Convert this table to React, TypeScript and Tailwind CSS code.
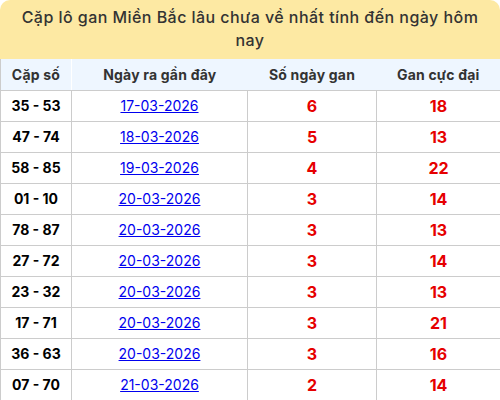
const rows = [
  { pair: "35 - 53", date: "17-03-2026", days: "6", max: "18" },
  { pair: "47 - 74", date: "18-03-2026", days: "5", max: "13" },
  { pair: "58 - 85", date: "19-03-2026", days: "4", max: "22" },
  { pair: "01 - 10", date: "20-03-2026", days: "3", max: "14" },
  { pair: "78 - 87", date: "20-03-2026", days: "3", max: "13" },
  { pair: "27 - 72", date: "20-03-2026", days: "3", max: "14" },
  { pair: "23 - 32", date: "20-03-2026", days: "3", max: "13" },
  { pair: "17 - 71", date: "20-03-2026", days: "3", max: "21" },
  { pair: "36 - 63", date: "20-03-2026", days: "3", max: "16" },
  { pair: "07 - 70", date: "21-03-2026", days: "2", max: "14" },
];

export default function App() {
  return (
    <div
      className="w-[500px] h-[400px] bg-white overflow-hidden"
      style={{ fontFamily: "Inter, 'Noto Sans', sans-serif" }}
    >
      <div className="h-[59px] rounded-t-[10px] bg-[#fde9a3] px-[18px] pt-[6px] text-center text-[16px] leading-[23px] tracking-[0.45px] font-medium text-[#333]">
        Cặp lô gan Miền Bắc lâu chưa về nhất tính đến ngày hôm nay
      </div>
      <table className="w-[500px] table-fixed border-collapse">
        <colgroup>
          <col className="w-[71px]" />
          <col className="w-[176px]" />
          <col className="w-[129px]" />
          <col className="w-[124px]" />
        </colgroup>
        <thead>
          <tr className="h-[31px] bg-[#eef6ff] text-[14px] font-semibold text-[#333] tracking-[0.2px]">
            <th className="border-b border-l border-b-[#cccccc] border-l-[#cccccc] border-r border-r-[#ffffff] p-0">Cặp số</th>
            <th className="border-b border-[#cccccc] p-0">Ngày ra gần đây</th>
            <th className="border-b border-[#cccccc] p-0">Số ngày gan</th>
            <th className="border-b border-r border-[#cccccc] p-0">Gan cực đại</th>
          </tr>
        </thead>
        <tbody>
          {rows.map((r, i) => (
            <tr key={i} className="h-[31px] text-center">
              <td className="border border-[#cccccc] p-0 text-[14px] font-bold text-black">{r.pair}</td>
              <td className="border border-[#cccccc] p-0 text-[14px]">
                <a href="#" className="text-[#0000ee] underline">{r.date}</a>
              </td>
              <td className="border border-[#cccccc] p-0 text-[16px] font-bold text-[#e60000]">{r.days}</td>
              <td className="border border-[#cccccc] p-0 text-[16px] font-bold text-[#e60000]">{r.max}</td>
            </tr>
          ))}
        </tbody>
      </table>
    </div>
  );
}
